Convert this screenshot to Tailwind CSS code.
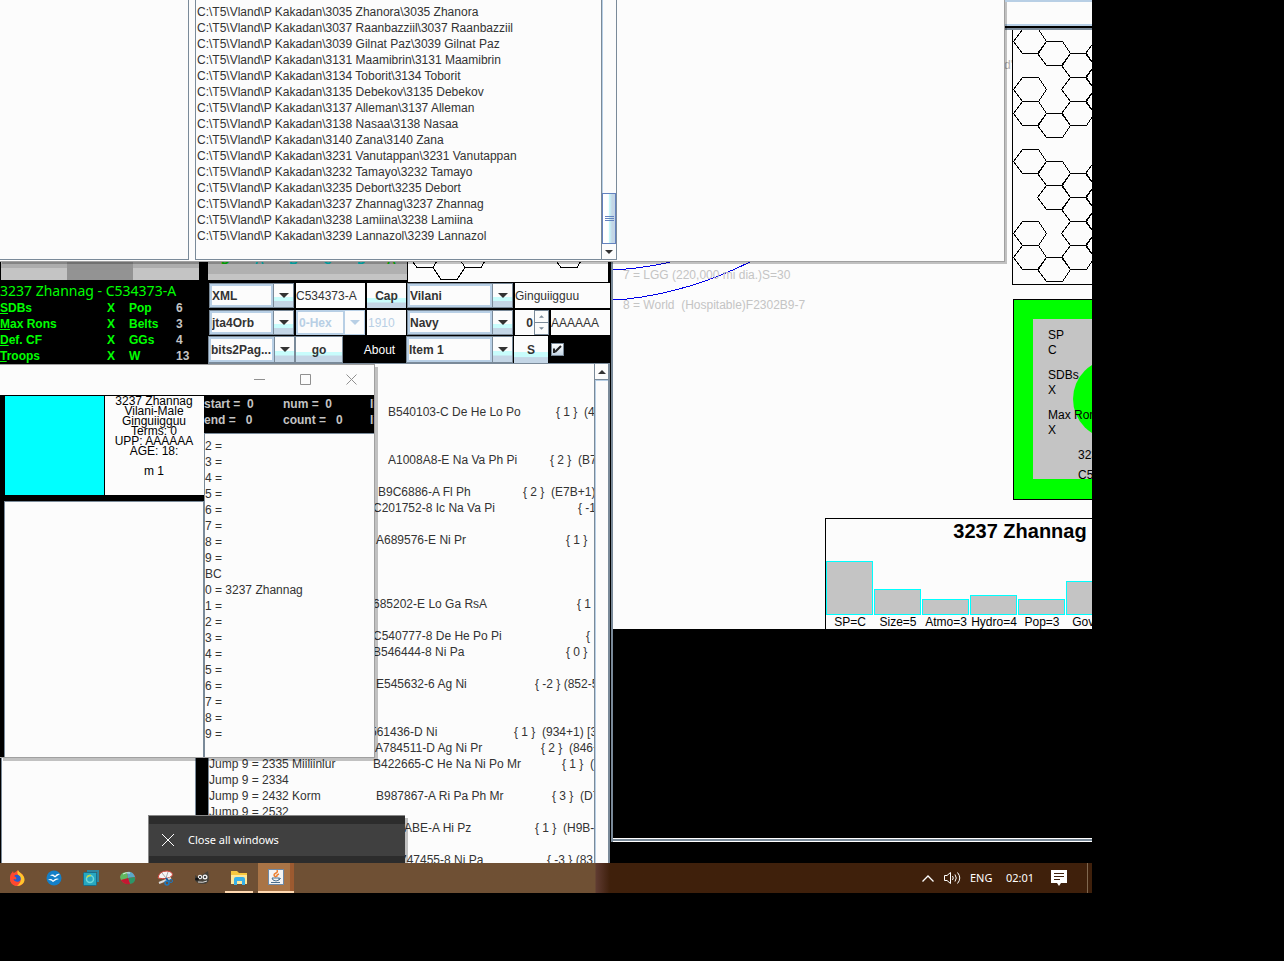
<!DOCTYPE html>
<html lang="en">
<head>
<meta charset="utf-8">
<title>World Builder Desktop</title>
<script src="https://cdn.jsdelivr.net/npm/@tailwindcss/browser@4"></script>
</head>
<body class="min-h-screen bg-black text-[#333333] text-xs leading-4 font-['Liberation_Sans',Arial,sans-serif]">
<main class="relative h-[893px] w-full max-w-[1092px] overflow-hidden bg-black">

  <!-- System map window -->
  <section class="absolute left-[611px] right-0 top-0 flex h-[842px] flex-col border-l-2 border-[#7a8a99] bg-[#fcfcfc]" aria-label="System map">
    <div class="flex h-[30px] shrink-0 flex-col border-b-2 border-[#7a8a99] bg-black pb-[2px]">
      <input aria-label="Map search" class="h-[26px] w-full border-y-2 border-[#b8cfe5] bg-[#fcfcfc]">
    </div>
    <div class="relative h-[599px] shrink-0 overflow-hidden">
      <svg class="absolute left-0 top-[231px]" width="160" height="44" viewBox="613 261 160 44" fill="none" stroke="#0000e8" shape-rendering="crispEdges"><path d="M613 269.500L626 269Q650 267 675 261M613 299.500L627 299Q690 292 752 261"/></svg>
      <p class="absolute left-[10px] top-[237px] text-[#c4c4c4]">7 = LGG (220,000 mi dia.)S=30</p>
      <p class="absolute left-[10px] top-[267px] whitespace-pre text-[#c4c4c4]">8 = World  (Hospitable)F2302B9-7</p>
      <p class="absolute left-[391px] top-[27px] text-[#b0b0b0]">d'</p>
      <svg class="absolute left-[399px] -top-px" width="80" height="256" viewBox="1012 29 80 256" fill="none" stroke="#000" shape-rendering="crispEdges">
        <defs><path id="hx" d="M0 0L9 -12H25L33 0L25 12H9Z"/></defs>
        <path d="M1100 284.500H1012.500V29.500H1100"/>
        <g transform="translate(1013.500 .5)"><use href="#hx" y="41"/><use href="#hx" y="89"/><use href="#hx" y="113"/><use href="#hx" y="161"/><use href="#hx" y="233"/><use href="#hx" y="257"/></g>
        <g transform="translate(1037.500 .5)"><use href="#hx" y="53"/><use href="#hx" y="125"/><use href="#hx" y="173"/><use href="#hx" y="197"/><use href="#hx" y="269"/></g>
        <g transform="translate(1061.500 .5)"><use href="#hx" y="65"/><use href="#hx" y="89"/><use href="#hx" y="113"/><use href="#hx" y="185"/><use href="#hx" y="209"/><use href="#hx" y="233"/><use href="#hx" y="257"/></g>
        <g transform="translate(1085.500 .5)"><use href="#hx" y="53"/><use href="#hx" y="77"/><use href="#hx" y="101"/><use href="#hx" y="173"/><use href="#hx" y="197"/><use href="#hx" y="221"/><use href="#hx" y="245"/></g>
      </svg>
      <div class="absolute left-[400px] top-[269px] h-[201px] w-[201px] border border-black bg-[#00ff00] p-[19px] text-black">
        <div class="relative h-40 bg-[#c4c4c4] pl-[15px] pt-[9px]">
          <span class="absolute left-10 top-10 h-20 w-20 rounded-full bg-[#00ff00]"></span>
          <div class="relative leading-[15px]">
            <p>SP</p><p>C</p>
            <p class="mt-[10px]">SDBs</p><p>X</p>
            <p class="mt-[10px]">Max Rons</p><p>X</p>
            <p class="mt-[10px] pl-[30px]">3237 Zhannag</p><p class="mt-[5px] pl-[30px]">C534373-A</p>
          </div>
        </div>
      </div>
      <div class="absolute left-[212px] top-[488px] h-[111px] w-[389px] border-l border-t border-black text-black">
        <h2 class="text-center text-xl leading-6 font-bold">3237 Zhannag</h2>
        <div class="mt-[18px] flex h-[54px] items-end gap-px text-center">
          <div class="h-[54px] w-[47px] shrink-0 border border-[#00ffff] bg-[#c4c4c4]"></div>
          <div class="h-[26px] w-[47px] shrink-0 border border-[#00ffff] bg-[#c4c4c4]"></div>
          <div class="h-4 w-[47px] shrink-0 border border-[#00ffff] bg-[#c4c4c4]"></div>
          <div class="h-5 w-[47px] shrink-0 border border-[#00ffff] bg-[#c4c4c4]"></div>
          <div class="h-4 w-[47px] shrink-0 border border-[#00ffff] bg-[#c4c4c4]"></div>
          <div class="h-[34px] w-[47px] shrink-0 border border-[#00ffff] bg-[#c4c4c4]"></div>
        </div>
        <div class="flex whitespace-nowrap pt-px text-center leading-[13px]">
          <span class="w-12 shrink-0">SP=C</span><span class="w-12 shrink-0">Size=5</span><span class="w-12 shrink-0">Atmo=3</span><span class="w-12 shrink-0">Hydro=4</span><span class="w-12 shrink-0">Pop=3</span><span class="w-12 shrink-0">Gov=7</span>
        </div>
      </div>
    </div>
    <div class="grow bg-black"></div>
    <div class="h-1 shrink-0 border-y border-white bg-[#7a8a99]"></div>
  </section>

  <!-- World editor window -->
  <section class="absolute left-0 top-[261px] flex h-[602px] w-[610px] bg-black" aria-label="World editor">
    <div class="flex w-[208px] shrink-0 flex-col">
      <div class="ml-px flex h-[19px] w-[198px] shrink-0 bg-linear-to-b from-[#adadad] from-35% to-[#c4c4c4] to-35%"><span class="ml-[66px] w-[66px] bg-[#939393]"></span></div>
      <h1 class="mt-[2px] whitespace-nowrap font-['Noto_Sans',sans-serif] text-sm leading-[18px] text-[#00ff00]">3237 Zhannag - C534373-A</h1>
      <table class="w-[200px] table-fixed font-bold text-[#00ff00]">
        <colgroup><col class="w-[107px]"><col class="w-[22px]"><col class="w-[47px]"><col></colgroup>
        <tbody>
        <tr><td class="p-0"><u>S</u>DBs</td><td class="p-0">X</td><td class="p-0">Pop</td><td class="p-0 text-[#c4c4c4]">6</td></tr>
        <tr><td class="p-0"><u>M</u>ax Rons</td><td class="p-0">X</td><td class="p-0">Belts</td><td class="p-0 text-[#c4c4c4]">3</td></tr>
        <tr><td class="p-0"><u>D</u>ef. CF</td><td class="p-0">X</td><td class="p-0">GGs</td><td class="p-0 text-[#c4c4c4]">4</td></tr>
        <tr><td class="p-0"><u>T</u>roops</td><td class="p-0">X</td><td class="p-0">W</td><td class="p-0 text-[#c4c4c4]">13</td></tr>
        </tbody>
      </table>
      <div class="ml-px w-[195px] grow border-x border-[#7a8a99] bg-[#fcfcfc]"></div>
    </div>

    <div class="flex min-w-0 grow flex-col">
      <div class="flex h-[21px] shrink-0 items-start">
        <div class="h-[19px] w-[199px] overflow-hidden bg-linear-to-b from-[#b0b0b0] from-70% to-[#c4c4c4] to-70%">
          <div class="-mt-2 flex pl-[13px] font-bold leading-[14px] text-[#00c8c8]"><span class="w-[34px] text-[#00c800]">D</span><span class="w-[34px]">A</span><span class="w-[34px]">B</span><span class="w-[34px]">C</span><span class="w-[30px]">D</span><span class="text-[#00c800]">A</span></div>
        </div>
        <svg class="ml-px bg-[#fcfcfc]" width="200" height="21" viewBox="408 261 200 21" fill="none" stroke="#000" shape-rendering="crispEdges"><path d="M412 261L417 267.500H433L441 279.500H457L465 267.500H481L485 261M433 267.500L437 261M465 267.500L461 261M556 261L561 267.500H577L581 261"/></svg>
      </div>

      <form class="shrink-0 pt-px font-bold">
        <div class="flex h-[25px] gap-[2px] pl-px">
          <div class="flex w-[85px] shrink-0 border border-[#7a8a99]"><select aria-label="Format" class="min-w-0 grow appearance-none border-2 border-[#b8cfe5] bg-[#fcfcfc]"><option>XML</option></select><span class="flex w-5 shrink-0 items-center justify-center border-l border-[#7a8a99] bg-[linear-gradient(#fcfcfc_55%,#c8fcfc_55%,#c8fcfc_72%,#c4d6e6_76%)]"><svg width="10" height="5" viewBox="0 0 10 5"><path d="M0 0H10L5 5Z" fill="#333"/></svg></span></div>
          <input aria-label="UWP" value="C534373-A" class="w-[69px] shrink-0 bg-[#fcfcfc] font-normal">
          <button type="button" class="w-[39px] shrink-0 bg-[linear-gradient(#fcfcfc_60%,#c8fcfc_60%,#c8fcfc_76%,#c4d6e6_80%)]">Cap</button>
          <div class="-ml-px flex w-[106px] shrink-0 border border-[#7a8a99]"><select aria-label="Culture" class="min-w-0 grow appearance-none border-2 border-[#b8cfe5] bg-[#fcfcfc]"><option>Vilani</option></select><span class="flex w-5 shrink-0 items-center justify-center border-l border-[#7a8a99] bg-[linear-gradient(#fcfcfc_55%,#c8fcfc_55%,#c8fcfc_72%,#c4d6e6_76%)]"><svg width="10" height="5" viewBox="0 0 10 5"><path d="M0 0H10L5 5Z" fill="#333"/></svg></span></div>
          <input aria-label="Name" value="Ginguiigguu" class="w-0 min-w-0 grow bg-[#fcfcfc] font-normal">
        </div>
        <div class="mt-[2px] flex h-[25px] gap-[2px] pl-px">
          <div class="flex w-[85px] shrink-0 border border-[#7a8a99]"><select aria-label="Layout" class="min-w-0 grow appearance-none border-2 border-[#b8cfe5] bg-[#fcfcfc]"><option>jta4Orb</option></select><span class="flex w-5 shrink-0 items-center justify-center border-l border-[#7a8a99] bg-[linear-gradient(#fcfcfc_55%,#c8fcfc_55%,#c8fcfc_72%,#c4d6e6_76%)]"><svg width="10" height="5" viewBox="0 0 10 5"><path d="M0 0H10L5 5Z" fill="#333"/></svg></span></div>
          <div class="flex w-[69px] shrink-0 border border-[#b8cfe5]"><select aria-label="Hex" disabled class="min-w-0 grow appearance-none border border-[#b8cfe5] bg-[#fcfcfc] px-px text-[#b8cfe5] opacity-100"><option>0-Hex</option></select><span class="flex w-5 shrink-0 items-center justify-center border-l border-[#b8cfe5] bg-[#fcfcfc]"><svg width="10" height="5" viewBox="0 0 10 5"><path d="M0 0H10L5 5Z" fill="#b8cfe5"/></svg></span></div>
          <input aria-label="Hex number" disabled value="1910" class="w-[39px] shrink-0 bg-[#fcfcfc] px-px font-normal text-[#b8cfe5]">
          <div class="-ml-px flex w-[106px] shrink-0 border border-[#7a8a99]"><select aria-label="Service" class="min-w-0 grow appearance-none border-2 border-[#b8cfe5] bg-[#fcfcfc]"><option>Navy</option></select><span class="flex w-5 shrink-0 items-center justify-center border-l border-[#7a8a99] bg-[linear-gradient(#fcfcfc_55%,#c8fcfc_55%,#c8fcfc_72%,#c4d6e6_76%)]"><svg width="10" height="5" viewBox="0 0 10 5"><path d="M0 0H10L5 5Z" fill="#333"/></svg></span></div>
          <div class="flex w-[34px] shrink-0 bg-[#fcfcfc]"><input aria-label="Terms" value="0" class="w-[19px] shrink-0 pr-px text-right font-bold"><span class="flex w-[15px] flex-col divide-y divide-[#7a8a99] border border-[#7a8a99]"><button type="button" aria-label="Increase" class="flex grow items-center justify-center"><svg width="5" height="3" viewBox="0 0 6 3"><path d="M0 3L3 0L6 3Z" fill="#7a8a99"/></svg></button><button type="button" aria-label="Decrease" class="flex grow items-center justify-center"><svg width="5" height="3" viewBox="0 0 6 3"><path d="M0 0L3 3L6 0Z" fill="#7a8a99"/></svg></button></span></div>
          <input aria-label="UPP" value="AAAAAA" class="w-0 min-w-0 grow bg-[#fcfcfc] font-normal">
        </div>
        <div class="mt-px flex h-[27px] items-stretch">
          <div class="flex w-[87px] shrink-0 border border-[#7a8a99]"><select aria-label="Page" class="min-w-0 grow appearance-none border-2 border-[#b8cfe5] bg-[#fcfcfc]"><option>bits2Pag...</option></select><span class="flex w-5 shrink-0 items-center justify-center border-l border-[#7a8a99] bg-[linear-gradient(#fcfcfc_55%,#c8fcfc_55%,#c8fcfc_72%,#c4d6e6_76%)]"><svg width="10" height="5" viewBox="0 0 10 5"><path d="M0 0H10L5 5Z" fill="#333"/></svg></span></div>
          <button type="button" class="w-12 border border-[#7a8a99] bg-[linear-gradient(#fcfcfc_60%,#c8fcfc_60%,#c8fcfc_72%,#c4d6e6_76%)]">go</button>
          <button type="button" class="w-[63px] pl-[10px] font-normal text-white">About</button>
          <div class="flex w-[107px] shrink-0 border border-[#7a8a99]"><select aria-label="Item" class="min-w-0 grow appearance-none border-2 border-[#b8cfe5] bg-[#fcfcfc]"><option>Item 1</option></select><span class="flex w-5 shrink-0 items-center justify-center border-l border-[#7a8a99] bg-[linear-gradient(#fcfcfc_55%,#c8fcfc_55%,#c8fcfc_72%,#c4d6e6_76%)]"><svg width="10" height="5" viewBox="0 0 10 5"><path d="M0 0H10L5 5Z" fill="#333"/></svg></span></div>
          <button type="button" class="ml-px w-[34px] bg-[linear-gradient(#fcfcfc_60%,#c8fcfc_60%,#c8fcfc_76%,#c4d6e6_80%)]">S</button>
          <label class="ml-[3px] grid place-items-center self-center"><input type="checkbox" checked aria-label="Enabled" class="col-start-1 row-start-1 size-[13px] appearance-none border border-[#7a8a99] bg-linear-to-b from-white to-[#c4d6e6]"><svg class="pointer-events-none col-start-1 row-start-1" width="9" height="9" viewBox="0 0 9 9" fill="none" stroke="#222" stroke-width="2"><path d="M1 3.500V8M2 7L8 1"/></svg></label>
        </div>
      </form>

      <div class="flex min-h-0 grow border-r-2 border-t border-[#7a8a99] bg-[#fcfcfc]">
        <ul class="min-w-0 grow overflow-hidden border-l border-[#7a8a99] pt-2 [&_span]:whitespace-pre">
          <li class="h-4"></li>
          <li class="h-4"></li>
          <li class="flex h-4 pl-[179px]"><span class="w-[168px] shrink-0">B540103-C De He Lo Po</span><span>{ 1 }  (4C+1)</span></li>
          <li class="h-4"></li>
          <li class="h-4"></li>
          <li class="flex h-4 pl-[179px]"><span class="w-[162px] shrink-0">A1008A8-E Na Va Ph Pi</span><span>{ 2 }  (B7D+2)</span></li>
          <li class="h-4"></li>
          <li class="flex h-4 pl-[169px]"><span class="w-[145px] shrink-0">B9C6886-A Fl Ph</span><span>{ 2 }  (E7B+1)</span></li>
          <li class="flex h-4 pl-[164px]"><span class="w-[205px] shrink-0">C201752-8 Ic Na Va Pi</span><span>{ -1 }</span></li>
          <li class="h-4"></li>
          <li class="flex h-4 pl-[167px]"><span class="w-[190px] shrink-0">A689576-E Ni Pr</span><span>{ 1 }</span></li>
          <li class="h-4"></li>
          <li class="h-4"></li>
          <li class="h-4"></li>
          <li class="flex h-4 pl-[164px]"><span class="w-[204px] shrink-0">685202-E Lo Ga RsA</span><span>{ 1</span></li>
          <li class="h-4"></li>
          <li class="flex h-4 pl-[164px]"><span class="w-[213px] shrink-0">C540777-8 De He Po Pi</span><span>{</span></li>
          <li class="flex h-4 pl-[164px]"><span class="w-[193px] shrink-0">B546444-8 Ni Pa</span><span>{ 0 }</span></li>
          <li class="h-4"></li>
          <li class="flex h-4 pl-[167px]"><span class="w-[159px] shrink-0">E545632-6 Ag Ni</span><span>{ -2 } (852-5)</span></li>
          <li class="h-4"></li>
          <li class="h-4"></li>
          <li class="flex h-4 pl-[161px]"><span class="w-[144px] shrink-0">561436-D Ni</span><span>{ 1 }  (934+1) [35</span></li>
          <li class="flex h-4 pl-[166px]"><span class="w-[166px] shrink-0">A784511-D Ag Ni Pr</span><span>{ 2 }  (846+</span></li>
          <li class="flex h-4"><span class="w-[164px] shrink-0">Jump 9 = 2335 Miiliinlur</span><span class="w-[189px] shrink-0">B422665-C He Na Ni Po Mr</span><span>{ 1 }  (</span></li>
          <li class="h-4">Jump 9 = 2334</li>
          <li class="flex h-4"><span class="w-[167px] shrink-0">Jump 9 = 2432 Korm</span><span class="w-[176px] shrink-0">B987867-A Ri Pa Ph Mr</span><span>{ 3 }  (D7</span></li>
          <li class="h-4">Jump 9 = 2532</li>
          <li class="flex h-4 pl-[195px]"><span class="w-[131px] shrink-0">ABE-A Hi Pz</span><span>{ 1 }  (H9B-</span></li>
          <li class="h-4"></li>
          <li class="flex h-4 pl-[191px]"><span class="w-[147px] shrink-0">747455-8 Ni Pa</span><span>{ -3 } (83</span></li>
        </ul>
        <div class="flex w-[14px] shrink-0 flex-col border-l border-[#7a8a99]">
          <button type="button" aria-label="Scroll up" class="flex h-4 items-center justify-center border-b border-[#7a8a99]"><svg width="8" height="4" viewBox="0 0 8 4"><path d="M0 4L4 0L8 4Z" fill="#333"/></svg></button>
          <div class="grow border-l border-t border-[#b8cfe5]"></div>
        </div>
      </div>
    </div>
  </section>

  <!-- Character window -->
  <section class="absolute left-0 top-[364px] flex h-[394px] w-[375px] flex-col border-y border-r border-[#a0a0a0] bg-black shadow-[3px_3px_0_rgba(0,0,0,0.23)]" aria-label="Character">
    <header class="flex h-[30px] shrink-0 items-center justify-end gap-[35px] bg-[#fcfcfc] pr-[17px] pb-[2px] text-[#909090]">
      <button type="button" aria-label="Minimize"><svg width="11" height="11" viewBox="0 0 11 11"><path d="M0 5.500H11" stroke="currentColor"/></svg></button>
      <button type="button" aria-label="Maximize"><svg width="11" height="11" viewBox="0 0 11 11"><path d="M.5 .5H10.500V10.500H.5Z" fill="none" stroke="currentColor"/></svg></button>
      <button type="button" aria-label="Close"><svg width="11" height="11" viewBox="0 0 11 11"><path d="M.5 .5L10.500 10.500M10.500 .5L.5 10.500" stroke="currentColor"/></svg></button>
    </header>
    <div class="flex min-h-0 grow">
      <div class="flex w-[204px] shrink-0 flex-col pl-1">
        <div class="ml-px mt-px flex h-[99px]">
          <div class="w-[99px] bg-[#00ffff]"></div>
          <div class="ml-px grow bg-[#fcfcfc] pr-px text-center leading-[10px] text-black"><p>3237 Zhannag</p><p>Vilani-Male</p><p>Ginguiigguu</p><p>Terms: 0</p><p>UPP: AAAAAA</p><p>AGE: 18:</p><p class="pt-[10px]">m 1</p></div>
        </div>
        <div class="mt-[6px] grow border border-b-0 border-[#7a8a99] bg-[#fcfcfc]"></div>
      </div>
      <div class="flex min-w-0 grow flex-col">
        <div class="h-[38px] shrink-0 overflow-hidden pt-px font-bold text-[#c4c4c4] [&_span]:whitespace-pre">
          <p class="flex"><span class="w-[79px] shrink-0">start =  0</span><span class="w-[87px] shrink-0">num =  0</span><span>limit</span></p>
          <p class="flex"><span class="w-[79px] shrink-0">end =   0</span><span class="w-[87px] shrink-0">count =   0</span><span>line</span></p>
        </div>
        <div class="grow border-l border-t border-[#7a8a99] bg-[#fcfcfc] pt-1">
          <p>2 =</p><p>3 =</p><p>4 =</p><p>5 =</p><p>6 =</p><p>7 =</p><p>8 =</p><p>9 =</p><p>BC</p><p>0 = 3237 Zhannag</p><p>1 =</p><p>2 =</p><p>3 =</p><p>4 =</p><p>5 =</p><p>6 =</p><p>7 =</p><p>8 =</p><p>9 =</p>
        </div>
      </div>
    </div>
  </section>

  <!-- File list window -->
  <section class="absolute left-0 top-0 flex h-[262px] w-[1005px] border-b border-r border-[#a0a0a0] bg-[#fcfcfc] shadow-[2px_2px_0_rgba(0,0,0,0.23)]" aria-label="Files">
    <div class="mb-[1px] w-[189px] border-b border-r border-[#7a8a99]"></div>
    <div class="mb-[1px] ml-[6px] flex w-[422px] border-x border-b border-[#7a8a99]">
      <div class="grow whitespace-nowrap pl-px pt-1">
        <p>C:\T5\Vland\P Kakadan\3035 Zhanora\3035 Zhanora</p>
        <p>C:\T5\Vland\P Kakadan\3037 Raanbazziil\3037 Raanbazziil</p>
        <p>C:\T5\Vland\P Kakadan\3039 Gilnat Paz\3039 Gilnat Paz</p>
        <p>C:\T5\Vland\P Kakadan\3131 Maamibrin\3131 Maamibrin</p>
        <p>C:\T5\Vland\P Kakadan\3134 Toborit\3134 Toborit</p>
        <p>C:\T5\Vland\P Kakadan\3135 Debekov\3135 Debekov</p>
        <p>C:\T5\Vland\P Kakadan\3137 Alleman\3137 Alleman</p>
        <p>C:\T5\Vland\P Kakadan\3138 Nasaa\3138 Nasaa</p>
        <p>C:\T5\Vland\P Kakadan\3140 Zana\3140 Zana</p>
        <p>C:\T5\Vland\P Kakadan\3231 Vanutappan\3231 Vanutappan</p>
        <p>C:\T5\Vland\P Kakadan\3232 Tamayo\3232 Tamayo</p>
        <p>C:\T5\Vland\P Kakadan\3235 Debort\3235 Debort</p>
        <p>C:\T5\Vland\P Kakadan\3237 Zhannag\3237 Zhannag</p>
        <p>C:\T5\Vland\P Kakadan\3238 Lamiina\3238 Lamiina</p>
        <p>C:\T5\Vland\P Kakadan\3239 Lannazol\3239 Lannazol</p>
      </div>
      <div class="flex w-[15px] shrink-0 flex-col border-l border-[#7a8a99]">
        <div class="h-[193px] border-l border-[#b8cfe5]"></div>
        <div class="flex h-[51px] items-center justify-center border border-[#6382bf] bg-linear-to-r from-white from-45% via-[#c8fcfc] via-50% to-[#c4d6e6] to-75%"><svg width="9" height="6" viewBox="0 0 9 6" stroke="#6382bf"><path d="M0 .5H9M0 2.500H9M0 4.500H9"/></svg></div>
        <button type="button" aria-label="Scroll down" class="flex grow items-center justify-center"><svg width="8" height="4" viewBox="0 0 8 4"><path d="M0 0H8L4 4Z" fill="#333"/></svg></button>
      </div>
    </div>
  </section>

  <!-- Jump list menu -->
  <div class="absolute left-[148px] top-[815px] h-12 w-[257px] border-l border-t border-[#888] bg-[#2c2c2c] pt-2 shadow-[3px_3px_0_rgba(0,0,0,0.23)]">
    <button type="button" class="flex h-8 w-full items-center gap-[14px] bg-[#404040] pl-[13px] font-['Noto_Sans',sans-serif] text-[11px] text-white"><svg width="12" height="12" viewBox="0 0 12 12" stroke="#fff"><path d="M0 0L12 12M12 0L0 12"/></svg>Close all windows</button>
  </div>

  <!-- Taskbar -->
  <nav class="absolute inset-x-0 top-[863px] flex h-[30px] items-center bg-linear-to-r from-[#6f5034] from-[595px] via-[#5f3b31] via-[596px] to-[#3f200b] to-[610px] text-white" aria-label="Taskbar">
    <div class="flex h-full items-center gap-[9px] pl-[3px]">
      <button type="button" aria-label="Firefox" class="flex h-full w-7 items-center justify-center"><svg width="16" height="16" viewBox="0 0 16 16"><circle cx="8" cy="9" r="6.800" fill="#ff7a18"/><path d="M1 8C1 4 3 3 4 1L5 4C7 1 8 1 9 0C9 3 16 3 15 10C15 14 12 16 8 16C5 16 1 14 1 8Z" fill="#ff4830"/><path d="M9 0C10 3 15 4 15.500 9C16 13 12 16 8 16C12 13 13 9 10 6C8 4 8 2 9 0Z" fill="#ffc52c"/><path d="M5 6C8 3 13 6 11.500 10C10 13 5 12 4.500 9L7 9.500C8 8 7 7 5 6Z" fill="#225ed0"/></svg></button>
      <button type="button" aria-label="OpenOffice" class="flex h-full w-7 items-center justify-center"><svg width="16" height="16" viewBox="0 0 16 16"><circle cx="8" cy="8" r="7.500" fill="#1480c8"/><path d="M4 5.500Q7 3.500 9 6Q11 3 14 4Q12 5 9 7.500Q7 5.500 4 5.500M2 10Q5 8 7 10.500Q10 7.500 13 9Q10 9.500 7 12Q5 9.500 2 10" fill="#fff"/></svg></button>
      <button type="button" aria-label="Sync" class="flex h-full w-7 items-center justify-center"><svg width="16" height="16" viewBox="0 0 16 16"><path d="M4 1H15V12" fill="none" stroke="#2d86a0" stroke-width="2"/><rect x=".5" y="2.500" width="13" height="13" rx="1" fill="#28a8c0" stroke="#176e8c"/><circle cx="7" cy="9" r="3.500" fill="none" stroke="#70d8dc" stroke-width="1.500"/><path d="M4 7.500A3.500 3.500 0 0 1 8 5.600" fill="none" stroke="#c8d840" stroke-width="1.500"/></svg></button>
      <button type="button" aria-label="Chart" class="flex h-full w-7 items-center justify-center"><svg width="16" height="16" viewBox="0 0 16 16"><ellipse cx="8" cy="8" rx="7.500" ry="6" fill="#d43b40"/><path d="M0 7Q1 2 7 2L8 9L1 10Z" fill="#60b860"/><path d="M7 2Q13 1 15 7L8 8Z" fill="#58a8c8"/><path d="M8 8L15 7Q16 13 10 14Z" fill="#2c9668"/><path d="M8 8L10 14Q4 15 1 10Z" fill="#c41832"/><path d="M3 4Q6 2 10 3" fill="none" stroke="#d7eee1"/></svg></button>
      <button type="button" aria-label="Snipping Tool" class="flex h-full w-7 items-center justify-center"><svg width="16" height="16" viewBox="0 0 16 16"><path d="M1 8Q2 1 10 1Q17 2 15 6Q10 10 1 8Z" fill="#f8f5f3" stroke="#cc4438"/><path d="M5 3L9 8L11 2" fill="none" stroke="#aaa"/><path d="M2 13L14 8" stroke="#ddd" stroke-width="2"/><path d="M9 8L12 12" stroke="#155ea0" stroke-width="2"/><circle cx="10" cy="13" r="2" fill="none" stroke="#1e78c0" stroke-width="1.500"/><circle cx="14" cy="11" r="1.500" fill="none" stroke="#1e78c0"/></svg></button>
      <button type="button" aria-label="GIMP" class="flex h-full w-7 items-center justify-center"><svg width="16" height="16" viewBox="0 0 16 16"><path d="M1 5L4 7L8 5L14 1L15 8Q15 14 9 14Q3 14 1 10Z" fill="#454139"/><circle cx="6" cy="7" r="2.200" fill="#eee"/><circle cx="11" cy="7" r="2.500" fill="#eee"/><circle cx="6" cy="7" r="1" fill="#111"/><circle cx="11" cy="7" r="1" fill="#111"/><ellipse cx="3" cy="9" rx="2" ry="1.500" fill="#151515"/><path d="M4 12Q9 13 13 11" stroke="#ddd" fill="none"/></svg></button>
      <button type="button" aria-label="File Explorer" class="flex h-full w-7 items-center justify-center border-b-2 border-[#ffd8b0]"><svg width="17" height="15" viewBox="0 0 17 15"><path d="M0 1H6L8 3H16V13H0Z" fill="#f8c840"/><path d="M0 5H16V14H0Z" fill="#ffe89a"/><path d="M3 14V9Q3 7 5 7H12Q14 7 14 9V15H11V11H6V15H3Z" fill="#38b0e8"/></svg></button>
    </div>
    <button type="button" aria-label="Java" class="ml-[5px] flex h-full w-9 items-center justify-center border-b-2 border-[#ffd8b0] bg-linear-to-r from-[#a97446] from-90% to-[#9c5a30] to-90%"><svg width="16" height="16" viewBox="0 0 16 16"><rect x=".5" y=".5" width="15" height="15" fill="#f4f4f4" stroke="#6f8aa6"/><path d="M8 8Q4 6 8 4Q10 3 9 1M9 8Q8 6 11 5" fill="none" stroke="#ee8030" stroke-width="1.500"/><path d="M4 9H11V11Q8 13 5 11ZM11 9Q14 9 11 11M3 13.500H12" fill="none" stroke="#4c708e"/></svg></button>
    <div class="ml-auto flex h-full items-center pr-1 font-['Noto_Sans',sans-serif] text-[11px]">
      <button type="button" aria-label="Hidden icons"><svg width="12" height="7" viewBox="0 0 12 7" fill="none" stroke="#fff" stroke-width="1.300"><path d="M.5 6.500L6 1L11.500 6.500"/></svg></button>
      <button type="button" aria-label="Volume" class="ml-[10px]"><svg width="17" height="14" viewBox="0 0 17 14" fill="none" stroke="#fff"><path d="M.5 4.500H3L6.500 1.500V12.500L3 9.500H.5ZM8.500 5Q10 7 8.500 9M11 3.500Q13.500 7 11 10.500M13.500 1.500Q18 7 13.500 12.500"/></svg></button>
      <span class="ml-[9px] w-9">ENG</span>
      <time class="w-[45px]">02:01</time>
      <button type="button" aria-label="Notifications"><svg width="16" height="16" viewBox="0 0 16 16"><path d="M0 0H16V13H10L8 16L6 13H0Z" fill="#fff"/><path d="M3 3.500H13M3 6.500H13M3 9.500H9" stroke="#3f200b"/></svg></button>
      <span class="ml-5 h-full w-px bg-[#806850]"></span>
    </div>
  </nav>
</main>
</body>
</html>
